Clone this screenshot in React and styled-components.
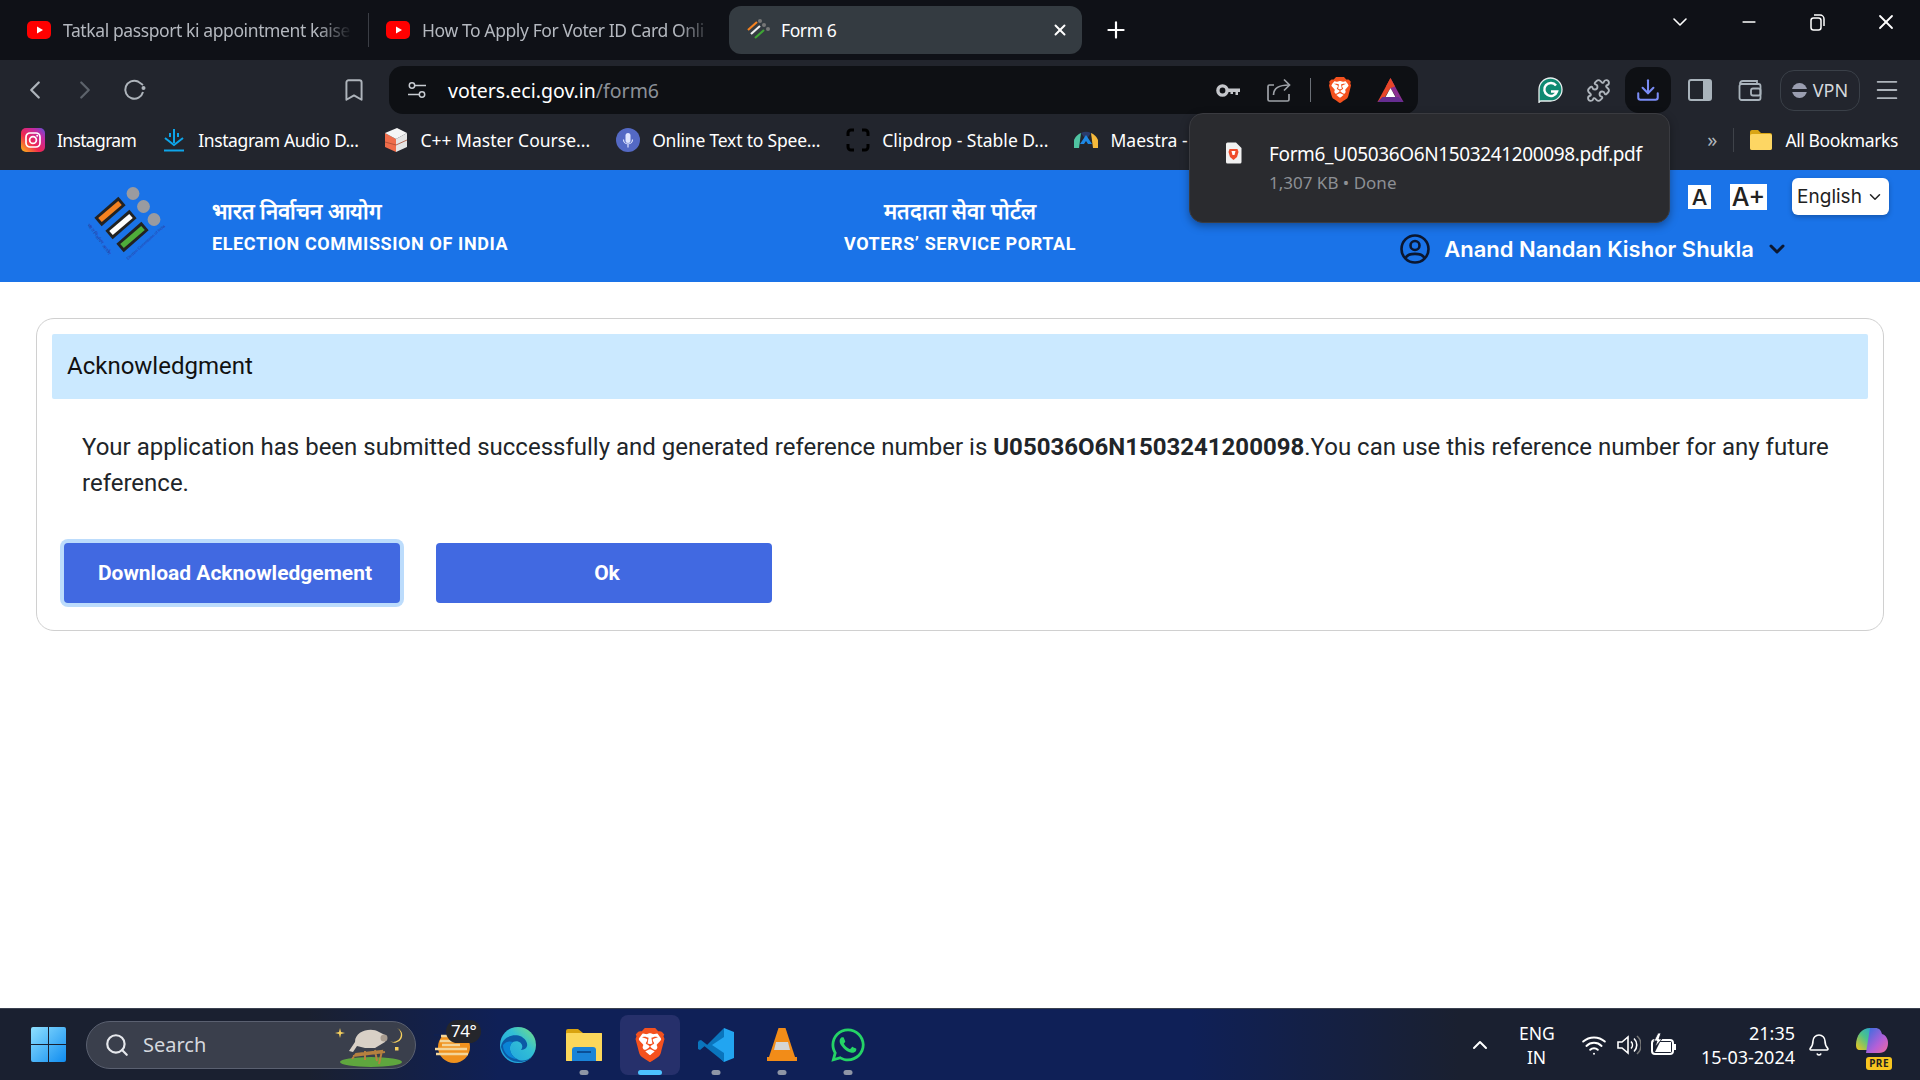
import React from 'react';
import styled, { createGlobalStyle } from 'styled-components';
import { ChevronLeft, ChevronRight, ChevronDown, ChevronUp, Bookmark, Puzzle, Download, X, Plus, Minus, Menu, Search, Bell, Wifi } from 'lucide-react';
import { FaWhatsapp } from 'react-icons/fa';
import { SiBrave } from 'react-icons/si';

const UI_FONT = `"Noto Sans", "Open Sans", sans-serif`;

const GlobalStyle = createGlobalStyle`
  html, body {
    margin: 0;
    padding: 0;
    background: #fff;
    overflow: hidden;
  }
  * {
    box-sizing: border-box;
  }
`;

const YoutubeIcon = () => (
  <svg width="24" height="18" viewBox="0 0 24 18">
    <rect width="24" height="18" rx="5" fill="#f00" />
    <path d="M10 5.5 L16 9 L10 12.5 Z" fill="#fff" />
  </svg>
);

const EciFavicon = () => (
  <svg width="24" height="24" viewBox="0 0 24 24" fill="none" strokeWidth="2.2">
    <path d="M2 12 L11 4" stroke="#f58220" />
    <path d="M5 16 L14 8" stroke="#eee" />
    <path d="M9 20 L18 12" stroke="#3fa535" />
    <circle cx="14" cy="3" r="2" fill="#777" />
    <circle cx="18" cy="7" r="2" fill="#777" />
    <circle cx="22" cy="11" r="2" fill="#777" />
  </svg>
);

const EciLogo = () => (
  <svg width="110" height="90" viewBox="0 0 110 90" fill="none">
    <circle cx="63" cy="18.5" r="6.4" fill="#9a9ba0" />
    <circle cx="73.5" cy="31.5" r="6.4" fill="#9a9ba0" />
    <circle cx="84" cy="44.5" r="6.4" fill="#9a9ba0" />
    <path d="M28 47 L52 26" stroke="#222" strokeWidth="11" />
    <path d="M39 60 L63 39" stroke="#222" strokeWidth="11" />
    <path d="M50 73 L75 51" stroke="#222" strokeWidth="11" />
    <path d="M30 45 L50 28" stroke="#f58220" strokeWidth="5.5" />
    <path d="M41 58 L61 41" stroke="#fff" strokeWidth="5.5" />
    <path d="M52 71 L73 53" stroke="#4fae3a" strokeWidth="5.5" />
    <text x="17" y="50" fontSize="4.6" fill="#2c3a9e" fontFamily="Liberation Sans, sans-serif" transform="rotate(54 17 50)">भारत निर्वाचन आयोग</text>
    <text x="58" y="85" fontSize="3.9" fill="#2c3a9e" fontFamily="Liberation Sans, sans-serif" transform="rotate(-42 58 85)">Election Commission of India</text>
  </svg>
);

const SliderIcon = () => (
  <svg width="20" height="20" viewBox="0 0 20 20" fill="none" stroke="#c8ccd2" strokeWidth="1.5">
    <circle cx="5" cy="5.5" r="2.7" />
    <path d="M8 5.5 H19" />
    <circle cx="15" cy="14.5" r="2.7" />
    <path d="M1 14.5 H12" />
  </svg>
);

const ReloadIcon = () => (
  <svg width="24" height="24" viewBox="0 0 24 24" fill="none" stroke="#aeb4bb" strokeWidth="2">
    <path d="M20 14 A 9 9 0 1 1 15 3.5 L 20 7" />
    <circle cx="20.5" cy="10" r="2" fill="#aeb4bb" stroke="none" />
  </svg>
);

const KeyIcon = () => (
  <svg width="24" height="13" viewBox="0 0 24 13" fill="none">
    <circle cx="6.5" cy="6.5" r="4.6" stroke="#c4c6ca" strokeWidth="3.4" />
    <path d="M11 4.5 H24 V8 H22 V11 H19.5 V8 H17 V10 H14.5 V8 H11 Z" fill="#c4c6ca" />
  </svg>
);

const ShareIcon = () => (
  <svg width="24" height="24" viewBox="0 0 24 24" fill="none" stroke="#9ea2a8" strokeWidth="1.7">
    <path d="M7 7 H2.5 A 1.5 1.5 0 0 0 1 8.5 V21.5 A 1.5 1.5 0 0 0 2.5 23 H20.5 A 1.5 1.5 0 0 0 22 21.5 V16" />
    <path d="M6.5 17 C 6.5 10, 12 7, 22 7" />
    <path d="M17 1.5 L22.5 7 L17 12.5" />
  </svg>
);

const BraveIcon = ({ size = 26 }) => (
  <BraveWrap $size={size}>
    <svg width={size} height={size} viewBox="0 0 24 24">
      <path d="M5 3.5 H19 L21 8 L18 18 L12 23 L6 18 L3 8 Z" fill="#fff" />
    </svg>
    <SiBrave size={size} color="#f4511e" />
  </BraveWrap>
);

const BatIcon = () => (
  <svg width="27" height="26" viewBox="0 0 27 26">
    <path d="M13.5 1 L0.5 25 H5 L13.5 11 Z" fill="#e8462a" />
    <path d="M13.5 1 L26.5 25 H22 L13.5 11 Z" fill="#8c2f91" />
    <path d="M13.5 1 L9 9.5 L13.5 11 L18 9.5 Z" fill="#e8462a" />
    <path d="M13.5 11 L18.5 20 H8.5 Z" fill="#fff" />
    <path d="M0.5 25 L5.5 20 H21.5 L26.5 25 Z" fill="#662d91" />
  </svg>
);

const GrammarlyIcon = () => (
  <svg width="25" height="27" viewBox="0 0 25 27" fill="none">
    <path d="M12.5 1 A 11.5 11.5 0 1 1 12.5 24 H3 Q 1 24 1 26 V12.5 A 11.5 11.5 0 0 1 12.5 1 Z" fill="#0f8a72" stroke="#e8eeee" strokeWidth="1.3" />
    <path d="M18 8.5 A 6.5 6.5 0 1 0 19 14.5 H13" stroke="#fff" strokeWidth="2.4" />
  </svg>
);

const SidebarIcon = () => (
  <svg width="24" height="24" viewBox="0 0 24 24" fill="none">
    <rect x="1" y="2" width="22" height="20" rx="2" stroke="#a9b3bb" strokeWidth="2" />
    <rect x="15" y="2" width="8" height="20" fill="#a9b3bb" />
  </svg>
);

const WalletIcon = () => (
  <svg width="24" height="24" viewBox="0 0 24 24" fill="none" stroke="#a9b3bb" strokeWidth="1.8">
    <path d="M2 6 A 3 3 0 0 1 5 3 H19 V7" />
    <rect x="1.5" y="6" width="21" height="16" rx="2" />
    <rect x="13" y="10.5" width="9.5" height="7" rx="2" />
  </svg>
);

const RestoreIcon = () => (
  <svg width="15" height="18" viewBox="0 0 15 18" fill="none" stroke="#fff" strokeWidth="1.5">
    <rect x="1" y="5" width="10" height="12" rx="2.5" />
    <path d="M4 2 H10 A 4 4 0 0 1 14 6 V13" />
  </svg>
);

const InstagramIcon = () => (
  <svg width="24" height="24" viewBox="0 0 24 24" fill="none">
    <defs>
      <linearGradient id="ig" x1="0" y1="1" x2="1" y2="0">
        <stop offset="0" stopColor="#fdc014" />
        <stop offset="0.4" stopColor="#f0264f" />
        <stop offset="0.75" stopColor="#c32aa3" />
        <stop offset="1" stopColor="#5b51d8" />
      </linearGradient>
    </defs>
    <rect width="24" height="24" rx="5" fill="url(#ig)" />
    <rect x="5" y="5" width="14" height="14" rx="4" stroke="#fff" strokeWidth="1.7" />
    <circle cx="12" cy="12" r="3.4" stroke="#fff" strokeWidth="1.7" />
    <circle cx="16.2" cy="7.8" r="1" fill="#fff" />
  </svg>
);

const AudioDownloadIcon = () => (
  <svg width="24" height="24" viewBox="0 0 24 24" fill="none" stroke="#0ea5e9" strokeWidth="2">
    <path d="M12 1 V15 M8 5 V9 M16 5 V9" />
    <path d="M3 10 L12 17 L21 10" />
    <path d="M2 22.5 H22" />
  </svg>
);

const CubeIcon = () => (
  <svg width="24" height="26" viewBox="0 0 24 26">
    <path d="M1 6 L12 12 V25 L1 20 Z" fill="#ef6c4a" />
    <path d="M23 6 L12 12 V25 L23 20 Z" fill="#e4e4e4" />
    <path d="M1 6 L13 1 L23 6 L12 12 Z" fill="#f5f5f5" />
    <path d="M1 15 L12 18 L23 13" fill="none" stroke="#a64b33" strokeWidth="0.8" />
  </svg>
);

const MicIcon = () => (
  <svg width="24" height="24" viewBox="0 0 24 24" fill="none">
    <circle cx="12" cy="12" r="12" fill="#5469c4" />
    <rect x="9.5" y="5" width="5" height="10" rx="2.5" fill="#dfe5ff" />
    <path d="M7.5 11.5 A 4.5 4.5 0 0 0 16.5 11.5 M12 16 V19.5" stroke="#dfe5ff" strokeWidth="1.2" />
  </svg>
);

const ClipdropIcon = () => (
  <svg width="24" height="24" viewBox="0 0 24 24" fill="none" stroke="#000" strokeWidth="3">
    <path d="M2 8 V5 A 3 3 0 0 1 5 2 H8 M16 2 H19 A 3 3 0 0 1 22 5 V8 M22 16 V19 A 3 3 0 0 1 19 22 H16 M8 22 H5 A 3 3 0 0 1 2 19 V16" />
  </svg>
);

const MaestraIcon = () => (
  <svg width="24" height="20" viewBox="0 0 24 20">
    <path d="M0 18 A 12 12 0 0 1 7 3 L5 18 Z" fill="#4fc3a1" />
    <path d="M24 18 A 12 12 0 0 0 17 3 L19 18 Z" fill="#f5b93b" />
    <path d="M7 3 A 12 12 0 0 1 17 3 L12 10 Z" fill="#2a3b6b" />
    <path d="M12 5 L18 14 H14 L12 11 L10 14 H6 Z" fill="#1e88e5" />
  </svg>
);

const FolderIcon = () => (
  <svg width="24" height="22" viewBox="0 0 24 22">
    <path d="M1 3 A 2 2 0 0 1 3 1 H9 L12 4 H21 A 2 2 0 0 1 23 6 V19 A 2 2 0 0 1 21 21 H3 A 2 2 0 0 1 1 19 Z" fill="#d9a514" />
    <rect x="1" y="5" width="22" height="16" rx="2" fill="#fdd663" />
  </svg>
);

const PdfFileIcon = () => (
  <svg width="17" height="22" viewBox="0 0 17 22">
    <path d="M1 2 A 1.5 1.5 0 0 1 2.5 0.5 H11 L16.5 6 V20 A 1.5 1.5 0 0 1 15 21.5 H2.5 A 1.5 1.5 0 0 1 1 20 Z" fill="#f1f1f1" />
    <path d="M4.5 7 H12.5 L13.5 10 L12 15 L8.5 18 L5 15 L3.5 10 Z" fill="#ef4b2a" />
    <path d="M6.5 9 H10.5 L9.5 13 H7.5 Z" fill="#fff" />
  </svg>
);

const UserIcon = () => (
  <svg width="30" height="30" viewBox="0 0 30 30" fill="none" stroke="#0b1730" strokeWidth="2.6">
    <circle cx="15" cy="15" r="13.5" />
    <circle cx="15" cy="11.5" r="4.5" />
    <path d="M5.5 24 C 8 18.5, 22 18.5, 24.5 24" />
  </svg>
);

const WindowsLogo = () => (
  <svg width="35" height="35" viewBox="0 0 35 35">
    <defs>
      <linearGradient id="win" x1="0" y1="0" x2="1" y2="1">
        <stop offset="0" stopColor="#8fe0ff" />
        <stop offset="1" stopColor="#0f8cf0" />
      </linearGradient>
    </defs>
    <path d="M0 2 A 2 2 0 0 1 2 0 H17 V17 H0 Z M18 0 H33 A 2 2 0 0 1 35 2 V17 H18 Z M0 18 H17 V35 H2 A 2 2 0 0 1 0 33 Z M18 18 H35 V33 A 2 2 0 0 1 33 35 H18 Z" fill="url(#win)" />
  </svg>
);

const SheepArt = () => (
  <svg width="70" height="44" viewBox="0 0 70 44">
    <ellipse cx="36" cy="39" rx="31" ry="5" fill="#5fa63e" />
    <path d="M17 36 L21 31 L47 28 L44 41 M30 28 L30 37 M40 27 L42 38 M18 33 L50 29" stroke="#b5803f" strokeWidth="2" fill="none" />
    <path d="M14 28 L20 19 C 20 8, 36 4, 44 9 L52 13 L50 19 L40 25 L30 25 L22 23 L18 29 Z" fill="#d8d0c6" />
    <circle cx="49" cy="15" r="3.5" fill="#a89c90" />
    <path d="M62 5 A 7.5 7.5 0 1 1 55 18 A 6 6 0 0 0 62 5 Z" fill="#f7d15e" />
    <path d="M5 5 L6 9 L10 10 L6 11 L5 15 L4 11 L0 10 L4 9 Z" fill="#f7d15e" />
    <rect x="60" y="24" width="3.5" height="3.5" fill="#f7d15e" />
  </svg>
);

const WeatherIcon = () => (
  <svg width="36" height="30" viewBox="0 0 36 30">
    <circle cx="20" cy="13" r="16" fill="#f0921e" />
    <rect y="-6" width="36" height="8" fill="#0f2050" />
    <path d="M7 2 H14 M6 7 H20 M8 11 H26 M1 15 H33 M2 20 H34" stroke="#f3d59a" strokeWidth="2.6" />
  </svg>
);

const EdgeIcon = () => (
  <svg width="36" height="36" viewBox="0 0 36 36">
    <defs>
      <linearGradient id="edgeTop" x1="0" y1="1" x2="1" y2="0">
        <stop offset="0" stopColor="#1b9de2" />
        <stop offset="0.6" stopColor="#32bfd5" />
        <stop offset="1" stopColor="#7be07c" />
      </linearGradient>
    </defs>
    <circle cx="18" cy="18" r="18" fill="url(#edgeTop)" />
    <path d="M1 20 C 2 8, 20 4, 26 14 C 29 19, 26 23, 21 23 C 25 18, 19 12, 13 15 C 8 18, 9 28, 17 32 C 22 35, 28 33, 32 30 C 27 37, 6 39, 1 20 Z" fill="#0c5aa6" />
    <path d="M13 15 C 8 18, 9 28, 17 32 C 10 32, 3 26, 3 18 C 6 14, 10 14, 13 15 Z" fill="#0a84d6" />
  </svg>
);

const FilesIcon = () => (
  <svg width="36" height="34" viewBox="0 0 36 34">
    <path d="M0 3 A 2 2 0 0 1 2 1 H12 L17 5 H36 V33 H0 Z" fill="#d9a30f" />
    <rect y="5" width="36" height="28" rx="1" fill="#fbd75b" />
    <path d="M6 33 V22 A 3 3 0 0 1 9 19 H27 A 3 3 0 0 1 30 22 V33 Z" fill="#1a84d8" />
    <rect x="11" y="23" width="14" height="2" fill="#0b4f96" />
  </svg>
);

const VscodeIcon = () => (
  <svg width="36" height="36" viewBox="0 0 36 36">
    <path d="M26 1 L8 19 L2 14 L0 15 V22 L2 23 L8 18 L26 35 Z" fill="#0a75bd" />
    <path d="M0 14 L3 13 L26 31 V35 L20 30 Z" fill="#0a75bd" />
    <path d="M26 1 L36 5 V31 L26 35 L26 26 L14 18 L26 10 Z" fill="#22a5f1" />
  </svg>
);

const VlcIcon = () => (
  <svg width="30" height="36" viewBox="0 0 30 36">
    <path d="M11.5 1 H18.5 L28 30 H2 Z" fill="#f28c18" />
    <path d="M9 15 H21 L23 23 H7 Z" fill="#d5d5d5" />
    <path d="M0 30 H30 V34 H0 Z" fill="#f28c18" />
  </svg>
);

const SpeakerIcon = () => (
  <svg width="24" height="24" viewBox="0 0 24 24" fill="none" stroke="#fff" strokeWidth="1.6">
    <path d="M1 9 H5 L11 4 V20 L5 15 H1 Z" />
    <path d="M14 8.5 A 5 5 0 0 1 14 15.5 M17 5.5 A 9 9 0 0 1 17 18.5" />
    <path d="M20 3 A 12 12 0 0 1 20 21" stroke="#777" />
  </svg>
);

const BatteryIcon = () => (
  <svg width="26" height="24" viewBox="0 0 26 24" fill="none">
    <rect x="1" y="7" width="21" height="14" rx="3" stroke="#fff" strokeWidth="2" />
    <path d="M9 9 H20 V19 H4 Z" fill="#fff" />
    <path d="M23 11 H25 V17 H23 Z" fill="#fff" />
    <path d="M7 0 L3 8 H6 L4 14 L11 6 H8 L10 0 Z" fill="#fff" stroke="#1a2030" strokeWidth="0.8" />
  </svg>
);

const CopilotIcon = () => (
  <svg width="36" height="36" viewBox="0 0 36 36">
    <defs>
      <linearGradient id="copA" x1="0" y1="1" x2="1" y2="0">
        <stop offset="0" stopColor="#f5c518" />
        <stop offset="0.5" stopColor="#4cc38a" />
        <stop offset="1" stopColor="#1e9be8" />
      </linearGradient>
      <linearGradient id="copB" x1="0" y1="0" x2="1" y2="1">
        <stop offset="0" stopColor="#2f6fe0" />
        <stop offset="0.6" stopColor="#b45fd8" />
        <stop offset="1" stopColor="#f06a9c" />
      </linearGradient>
    </defs>
    <path d="M2 18 C 2 8, 8 1, 16 1 H23 L14 23 H6 C 3 23, 2 21, 2 18 Z" fill="url(#copA)" />
    <path d="M16 1 H22 C 25 1, 27 3, 28 7 C 32 8, 34 12, 34 16 C 34 22, 31 26, 25 26 H12 Z" fill="url(#copB)" />
  </svg>
);

const bookmarks = [
  { icon: <InstagramIcon />, label: 'Instagram', spacing: -0.65 },
  { icon: <AudioDownloadIcon />, label: 'Instagram Audio D...', spacing: -0.4 },
  { icon: <CubeIcon />, label: 'C++ Master Course...', spacing: 0 },
  { icon: <MicIcon />, label: 'Online Text to Spee...', spacing: -0.2 },
  { icon: <ClipdropIcon />, label: 'Clipdrop - Stable D...', spacing: 0 },
  { icon: <MaestraIcon />, label: 'Maestra - Voice', spacing: 0 },
];

const App = () => {
  return (
    <Page>
      <GlobalStyle />
      <TabStrip>
        <Tab $width={352} $pad={11}>
          <YoutubeIcon />
          <TabTitle>Tatkal passport ki appointment kaise</TabTitle>
        </Tab>
        <TabDivider />
        <Tab $width={360} $pad={17}>
          <YoutubeIcon />
          <TabTitle>How To Apply For Voter ID Card Onli</TabTitle>
        </Tab>
        <ActiveTab>
          <EciFavicon />
          <ActiveTitle>Form 6</ActiveTitle>
          <X size={18} color="#fff" strokeWidth={2.6} />
        </ActiveTab>
        <NewTab><Plus size={26} color="#fff" strokeWidth={2} /></NewTab>
        <WindowControls>
          <WindowButton><ChevronDown size={24} color="#fff" strokeWidth={1.6} /></WindowButton>
          <WindowButton><Minus size={20} color="#fff" strokeWidth={2} /></WindowButton>
          <WindowButton><RestoreIcon /></WindowButton>
          <WindowButton><X size={24} color="#fff" strokeWidth={1.8} /></WindowButton>
        </WindowControls>
      </TabStrip>

      <Toolbar>
        <NavButton><ChevronLeft size={30} color="#aeb4bb" strokeWidth={1.8} /></NavButton>
        <NavButton><ChevronRight size={30} color="#5d636b" strokeWidth={1.8} /></NavButton>
        <NavButton><ReloadIcon /></NavButton>
        <BookmarkButton><Bookmark size={26} color="#aeb4bb" strokeWidth={1.8} /></BookmarkButton>
        <AddressBar>
          <SliderIcon />
          <Url>voters.eci.gov.in<UrlPath>/form6</UrlPath></Url>
          <AddressAction $left="auto"><KeyIcon /></AddressAction>
          <AddressAction $left="27px"><ShareIcon /></AddressAction>
          <AddressDivider />
          <AddressAction $left="16px"><BraveIcon /></AddressAction>
          <AddressAction $left="24px"><BatIcon /></AddressAction>
        </AddressBar>
        <ToolActions>
          <ToolButton><GrammarlyIcon /></ToolButton>
          <ToolButton $left={-2}><Puzzle size={25} color="#aeb4bb" strokeWidth={1.8} /></ToolButton>
          <ToolButton $active><Download size={26} color="#7a8cf5" strokeWidth={1.9} /></ToolButton>
          <ToolButton $left={2}><SidebarIcon /></ToolButton>
          <ToolButton><WalletIcon /></ToolButton>
          <VpnButton><VpnDot />VPN</VpnButton>
          <ToolButton><Menu size={28} color="#aeb4bb" strokeWidth={1.6} /></ToolButton>
        </ToolActions>
      </Toolbar>

      <BookmarksBar>
        <BookmarkList>
          {bookmarks.map((item) => (
            <BookmarkItem key={item.label} $spacing={item.spacing}>
              {item.icon}
              <span>{item.label}</span>
            </BookmarkItem>
          ))}
        </BookmarkList>
        <MoreBookmarks>»</MoreBookmarks>
        <BookmarkDivider />
        <BookmarkItem $spacing={-0.4}>
          <FolderIcon />
          <span>All Bookmarks</span>
        </BookmarkItem>
      </BookmarksBar>

      <DownloadPopup>
        <PdfFileIcon />
        <div>
          <FileName>Form6_U05036O6N1503241200098.pdf.pdf</FileName>
          <FileMeta>1,307 KB • Done</FileMeta>
        </div>
      </DownloadPopup>

      <SiteHeader>
        <Brand>
          <LogoSlot><EciLogo /></LogoSlot>
          <BrandText>
            <HindiTitle>भारत निर्वाचन आयोग</HindiTitle>
            <EnglishTitle>ELECTION COMMISSION OF INDIA</EnglishTitle>
          </BrandText>
        </Brand>
        <PortalTitle>
          <HindiTitle>मतदाता सेवा पोर्टल</HindiTitle>
          <EnglishTitle>VOTERS’ SERVICE PORTAL</EnglishTitle>
        </PortalTitle>
        <HeaderRight>
          <HeaderControls>
            <FontButton $size={22} $width={23} $height={24}>A</FontButton>
            <FontButton $size={25} $width={37} $height={26}>A+</FontButton>
            <LanguageSelect>English <ChevronDown size={18} color="#222" strokeWidth={2} /></LanguageSelect>
          </HeaderControls>
          <UserRow>
            <UserIcon />
            <UserName>Anand Nandan Kishor Shukla</UserName>
            <ChevronDown size={24} color="#0b1730" strokeWidth={3} />
          </UserRow>
        </HeaderRight>
      </SiteHeader>

      <Main>
        <Card>
          <CardTitle>Acknowledgment</CardTitle>
          <Message>
            Your application has been submitted successfully and generated reference number is <strong>U05036O6N1503241200098</strong>.You can use this reference number for any future reference.
          </Message>
          <Actions>
            <ActionButton $focused>Download Acknowledgement</ActionButton>
            <ActionButton>Ok</ActionButton>
          </Actions>
        </Card>
      </Main>

      <Taskbar>
        <StartButton><WindowsLogo /></StartButton>
        <SearchBox>
          <Search size={26} color="#e6e8ec" strokeWidth={2} />
          <SearchLabel>Search</SearchLabel>
          <SearchArt><SheepArt /></SearchArt>
        </SearchBox>
        <WeatherSlot>
          <WeatherIcon />
          <WeatherBadge>74°</WeatherBadge>
        </WeatherSlot>
        <TaskIcon $left={6}><EdgeIcon /></TaskIcon>
        <TaskIcon $running><FilesIcon /></TaskIcon>
        <TaskIcon $active><BraveIcon size={34} /></TaskIcon>
        <TaskIcon $running><VscodeIcon /></TaskIcon>
        <TaskIcon $running><VlcIcon /></TaskIcon>
        <TaskIcon $running><FaWhatsapp size={38} color="#25d366" /></TaskIcon>
        <Tray>
          <ChevronUp size={24} color="#fff" strokeWidth={2} />
          <Language>ENG<br />IN</Language>
          <TrayIcons>
            <Wifi size={26} color="#fff" strokeWidth={1.8} />
            <SpeakerIcon />
            <BatteryIcon />
          </TrayIcons>
          <Clock>21:35<br />15-03-2024</Clock>
          <Bell size={24} color="#fff" strokeWidth={1.6} />
          <CopilotSlot>
            <CopilotIcon />
            <PreBadge>PRE</PreBadge>
          </CopilotSlot>
        </Tray>
      </Taskbar>
    </Page>
  );
};

const Page = styled.div`
  position: relative;
  display: flex;
  flex-direction: column;
  width: 1920px;
  height: 1080px;
  overflow: hidden;
  background: #fff;
  font-family: ${UI_FONT};
`;

const BraveWrap = styled.span`
  position: relative;
  display: inline-flex;
  width: ${(p) => p.$size}px;
  height: ${(p) => p.$size}px;
  svg + svg {
    position: absolute;
    left: 0;
    top: 0;
  }
`;

const TabStrip = styled.div`
  display: flex;
  align-items: center;
  height: 60px;
  padding-left: 16px;
  background: #0f1117;
`;

const Tab = styled.div`
  display: flex;
  align-items: center;
  gap: 12px;
  width: ${(p) => p.$width}px;
  padding: 0 16px 0 ${(p) => p.$pad}px;
  color: #b4b8bf;
  font-size: 17.5px;
  letter-spacing: -0.4px;
  white-space: nowrap;
  svg {
    flex: none;
  }
`;

const TabTitle = styled.span`
  flex: 1;
  overflow: hidden;
  mask-image: linear-gradient(to right, #000 88%, transparent 100%);
`;

const TabDivider = styled.div`
  width: 1px;
  height: 34px;
  background: #3b3e45;
`;

const ActiveTab = styled.div`
  display: flex;
  align-items: center;
  width: 353px;
  height: 48px;
  padding: 0 13px 0 17px;
  border-radius: 12px;
  background: #343b41;
  color: #fff;
  font-size: 17.5px;
  letter-spacing: -0.4px;
`;

const ActiveTitle = styled.span`
  flex: 1;
  margin-left: 11px;
`;

const NewTab = styled.div`
  display: flex;
  margin-left: 21px;
`;

const WindowControls = styled.div`
  display: flex;
  margin-left: auto;
`;

const WindowButton = styled.div`
  display: flex;
  align-items: center;
  justify-content: center;
  width: 68.5px;
  height: 44px;
  margin-bottom: 16px;
`;

const Toolbar = styled.div`
  display: flex;
  align-items: center;
  height: 54px;
  padding: 6px 0 0 10px;
  background: #22252d;
`;

const NavButton = styled.div`
  display: flex;
  align-items: center;
  justify-content: center;
  width: 50px;
`;

const BookmarkButton = styled(NavButton)`
  margin: 0 10px 0 169px;
`;

const AddressBar = styled.div`
  display: flex;
  align-items: center;
  width: 1029px;
  height: 48px;
  padding: 0 14px 0 18px;
  border-radius: 14px;
  background: #0e1014;
`;

const Url = styled.div`
  margin-left: 21px;
  color: #fff;
  font-size: 19.5px;
`;

const UrlPath = styled.span`
  color: #8b9098;
`;

const AddressAction = styled.div`
  display: flex;
  margin-left: ${(p) => p.$left};
`;

const AddressDivider = styled.div`
  width: 1px;
  height: 24px;
  margin-left: 19px;
  background: #6b7077;
`;

const ToolActions = styled.div`
  display: flex;
  align-items: center;
  gap: 4px;
  margin-left: 109px;
`;

const ToolButton = styled.div`
  display: flex;
  align-items: center;
  justify-content: center;
  width: 46px;
  height: 46px;
  margin-left: ${(p) => p.$left || 0}px;
  border-radius: 14px;
  background: ${(p) => (p.$active ? '#0e1014' : 'transparent')};
`;

const VpnButton = styled.div`
  display: flex;
  align-items: center;
  justify-content: center;
  gap: 6px;
  width: 80px;
  height: 41px;
  margin-left: 3px;
  border: 1.5px solid #3a4048;
  border-radius: 14px;
  color: #d5d8dc;
  font-size: 18px;
`;

const VpnDot = styled.span`
  width: 15px;
  height: 15px;
  border-radius: 50%;
  background: linear-gradient(#9a9eb0 0 40%, #22252d 40% 60%, #9a9eb0 60%);
`;

const BookmarksBar = styled.div`
  display: flex;
  align-items: center;
  height: 56px;
  padding: 0 22px 5px 21px;
  background: #22252d;
`;

const BookmarkList = styled.div`
  display: flex;
  align-items: center;
  gap: 26px;
  flex: 1;
  min-width: 0;
  overflow: hidden;
`;

const BookmarkItem = styled.div`
  display: flex;
  align-items: center;
  gap: 12px;
  flex: none;
  color: #fff;
  font-size: 17.5px;
  letter-spacing: ${(p) => p.$spacing}px;
  white-space: nowrap;
`;

const MoreBookmarks = styled.div`
  color: #aeb4bb;
  font-size: 20px;
  margin-right: 16px;
`;

const BookmarkDivider = styled.div`
  width: 1px;
  height: 24px;
  margin-right: 15px;
  background: #3f434a;
`;

const DownloadPopup = styled.div`
  position: absolute;
  left: 1189px;
  top: 113px;
  z-index: 5;
  display: flex;
  align-items: flex-start;
  gap: 27px;
  width: 481px;
  height: 110px;
  padding: 28px 0 0 35px;
  border: 1px solid #3a3b40;
  border-radius: 14px;
  background: #2a2b2f;
  box-shadow: 0 3px 8px rgba(0, 0, 0, 0.35);
`;

const FileName = styled.div`
  color: #fff;
  font-size: 19px;
  line-height: 24px;
  letter-spacing: -0.36px;
`;

const FileMeta = styled.div`
  margin-top: 5px;
  color: #8d9095;
  font-size: 17px;
  line-height: 24px;
`;

const SiteHeader = styled.header`
  display: grid;
  grid-template-columns: 1fr auto 1fr;
  height: 112px;
  background: #1a73e8;
  color: #fff;
  font-family: Roboto, "Liberation Sans", sans-serif;
`;

const Brand = styled.div`
  display: flex;
  align-items: center;
  gap: 32px;
  padding-left: 70px;
`;

const LogoSlot = styled.div`
  display: flex;
  margin-bottom: 12px;
`;

const BrandText = styled.div`
  display: flex;
  flex-direction: column;
  gap: 8px;
  padding-top: 3px;
`;

const HindiTitle = styled.div`
  font-size: 22px;
  font-weight: 700;
  line-height: 24px;
`;

const EnglishTitle = styled.div`
  font-size: 18px;
  font-weight: 700;
  line-height: 24px;
  letter-spacing: 0.6px;
`;

const PortalTitle = styled(BrandText)`
  align-items: center;
  justify-content: center;
`;

const HeaderRight = styled.div`
  display: flex;
  flex-direction: column;
  align-items: flex-end;
  padding: 8px 31px 0 0;
`;

const HeaderControls = styled.div`
  display: flex;
  align-items: center;
  gap: 25px;
`;

const FontButton = styled.div`
  display: flex;
  align-items: center;
  justify-content: center;
  width: ${(p) => p.$width}px;
  height: ${(p) => p.$height}px;
  background: #fff;
  color: #222;
  font-family: Inter, sans-serif;
  font-size: ${(p) => p.$size}px;
  font-weight: 500;
  &:first-child {
    margin-right: -6px;
  }
`;

const LanguageSelect = styled.div`
  display: flex;
  align-items: center;
  justify-content: center;
  gap: 4px;
  width: 97px;
  height: 37px;
  border-radius: 6px;
  background: #fff;
  box-shadow: 0 2px 5px rgba(0, 0, 0, 0.25);
  color: #222;
  font-family: Inter, sans-serif;
  font-size: 19px;
`;

const UserRow = styled.div`
  display: flex;
  align-items: center;
  margin: 19px 100px 0 0;
`;

const UserName = styled.div`
  margin: 0 11px 0 14px;
  font-family: Inter, sans-serif;
  font-size: 22px;
  font-weight: 600;
`;

const Main = styled.main`
  flex: 1;
  padding: 36px 36px 0;
  font-family: Roboto, "Liberation Sans", sans-serif;
`;

const Card = styled.section`
  height: 313px;
  padding: 15px 15px 0;
  border: 1.5px solid #d0d0d0;
  border-radius: 18px;
`;

const CardTitle = styled.h2`
  display: flex;
  align-items: center;
  height: 65px;
  margin: 0;
  padding: 0 0 2px 15px;
  border-radius: 2px;
  background: #cbe9ff;
  color: #111;
  font-size: 24px;
  font-weight: 400;
`;

const Message = styled.p`
  margin: 30px 0 0;
  padding: 0 30px;
  color: #212529;
  font-size: 24px;
  line-height: 36px;
  strong {
    font-weight: 700;
  }
`;

const Actions = styled.div`
  display: flex;
  gap: 36px;
  margin: 42px 0 0 12px;
`;

const ActionButton = styled.button`
  width: 336px;
  height: 60px;
  padding: 0 0 0 6px;
  border: none;
  border-radius: 4px;
  background: #4169e1;
  color: #fff;
  font-family: Roboto, "Liberation Sans", sans-serif;
  font-size: 21px;
  font-weight: 700;
  box-shadow: ${(p) => (p.$focused ? '0 0 0 4px #bcdcfc' : 'none')};
`;

const Taskbar = styled.footer`
  display: flex;
  align-items: center;
  height: 72px;
  border-top: 1px solid #3a4150;
  background: linear-gradient(90deg, #1a2030 0%, #1a2030 16%, #0f2057 26%, #0f2057 62%, #1a2030 76%, #1a2030 100%);
  font-family: ${UI_FONT};
  color: #fff;
`;

const StartButton = styled.div`
  display: flex;
  margin-left: 31px;
`;

const SearchBox = styled.div`
  display: flex;
  align-items: center;
  width: 330px;
  height: 48px;
  margin-left: 20px;
  padding: 0 10px 0 17px;
  border: 1px solid #5a6070;
  border-radius: 24px;
  background: #3a3f4c;
`;

const SearchLabel = styled.span`
  margin-left: 13px;
  color: #d5d8de;
  font-size: 20px;
`;

const SearchArt = styled.span`
  display: flex;
  margin-left: auto;
`;

const WeatherSlot = styled.div`
  position: relative;
  display: flex;
  width: 48px;
  height: 30px;
  margin: 8px 0 0 18px;
`;

const WeatherBadge = styled.span`
  position: absolute;
  left: 12px;
  top: -14px;
  padding: 1px 5px 2px;
  border-radius: 12px;
  background: #25262b;
  color: #fff;
  font-size: 17px;
  line-height: 20px;
  letter-spacing: -0.5px;
`;

const TaskIcon = styled.div`
  position: relative;
  display: flex;
  align-items: center;
  justify-content: center;
  width: 60px;
  height: 60px;
  margin-left: ${(p) => (p.$left ? p.$left : 6)}px;
  border-radius: 8px;
  background: ${(p) => (p.$active ? '#26306b' : 'transparent')};
  &::after {
    content: '';
    display: ${(p) => (p.$active || p.$running ? 'block' : 'none')};
    position: absolute;
    bottom: 0;
    left: 50%;
    transform: translateX(-50%);
    width: ${(p) => (p.$active ? 24 : 9)}px;
    height: 5px;
    border-radius: 3px;
    background: ${(p) => (p.$active ? '#4cc2ff' : '#8f96a6')};
  }
`;

const Tray = styled.div`
  display: flex;
  align-items: center;
  margin-left: auto;
  padding-right: 30px;
`;

const Language = styled.div`
  width: 35px;
  margin: 0 27px 0 27px;
  font-size: 17.5px;
  line-height: 24px;
  text-align: center;
`;

const TrayIcons = styled.div`
  display: flex;
  align-items: center;
  gap: 10px;
`;

const Clock = styled.div`
  width: 118px;
  font-size: 18px;
  line-height: 24px;
  text-align: right;
  margin: 0 12px 0 0;
`;

const CopilotSlot = styled.div`
  position: relative;
  display: flex;
  margin-left: 23px;
`;

const PreBadge = styled.span`
  position: absolute;
  right: -2px;
  bottom: -7px;
  padding: 0 3px;
  border-radius: 3px;
  background: #f7c520;
  color: #222;
  font-size: 10px;
  font-weight: 700;
  line-height: 13px;
  letter-spacing: 0.5px;
`;

export default App;
